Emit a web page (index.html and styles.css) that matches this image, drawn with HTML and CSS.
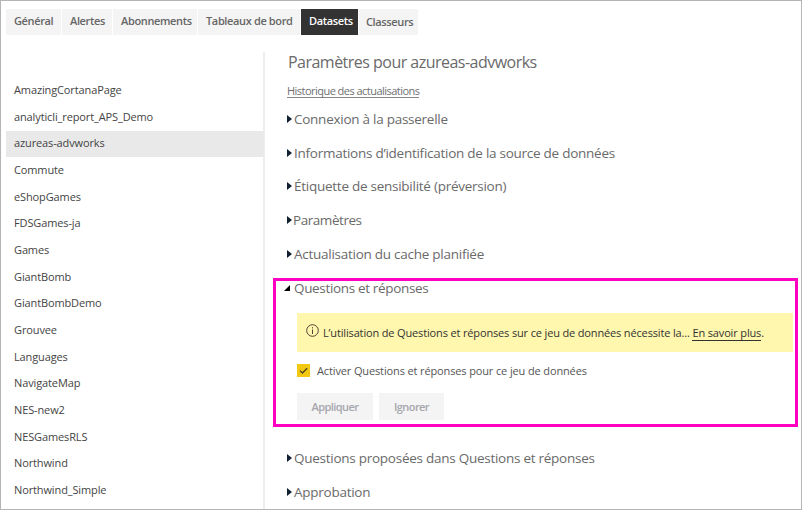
FILE: index.html
```html
<!DOCTYPE html>
<html lang="fr">
<head>
<meta charset="utf-8">
<title>Paramètres</title>
<link rel="stylesheet" href="styles.css">
</head>
<body>
<div class="page">
  <nav class="tabs">
    <a class="tab tab-general">Général</a>
    <a class="tab tab-alerts">Alertes</a>
    <a class="tab tab-subs">Abonnements</a>
    <a class="tab tab-dash">Tableaux de bord</a>
    <a class="tab tab-data active">Datasets</a>
    <a class="tab tab-books">Classeurs</a>
  </nav>
  <div class="body">
    <ul class="datasets">
      <li>AmazingCortanaPage</li>
      <li>analyticli_report_APS_Demo</li>
      <li class="selected">azureas-advworks</li>
      <li>Commute</li>
      <li>eShopGames</li>
      <li>FDSGames-ja</li>
      <li>Games</li>
      <li>GiantBomb</li>
      <li>GiantBombDemo</li>
      <li>Grouvee</li>
      <li>Languages</li>
      <li>NavigateMap</li>
      <li>NES-new2</li>
      <li>NESGamesRLS</li>
      <li>Northwind</li>
      <li>Northwind_Simple</li>
    </ul>
    <main class="settings">
      <h1>Paramètres pour azureas-advworks</h1>
      <div class="history"><a>Historique des actualisations</a></div>
      <h2><svg class="arrow" viewBox="0 0 5 8"><path d="M0 0L5 4L0 8Z"/></svg><span>Connexion à la passerelle</span></h2>
      <h2><svg class="arrow" viewBox="0 0 5 8"><path d="M0 0L5 4L0 8Z"/></svg><span>Informations d’identification de la source de données</span></h2>
      <h2><svg class="arrow" viewBox="0 0 5 8"><path d="M0 0L5 4L0 8Z"/></svg><span>Étiquette de sensibilité (préversion)</span></h2>
      <h2 class="tight"><svg class="arrow" viewBox="0 0 5 8"><path d="M0 0L5 4L0 8Z"/></svg><span>Paramètres</span></h2>
      <h2><svg class="arrow" viewBox="0 0 5 8"><path d="M0 0L5 4L0 8Z"/></svg><span>Actualisation du cache planifiée</span></h2>
      <section class="qna">
        <h2><svg class="arrow open" viewBox="0 0 6 6"><path d="M6 0V6H0Z"/></svg><span>Questions et réponses</span></h2>
        <div class="notice">
          <svg class="info" viewBox="0 0 13 13"><circle cx="6.5" cy="6.5" r="5.8"/><path d="M6.5 5.5V10M6.5 3.2V4.4"/></svg>
          <p>L’utilisation de Questions et réponses sur ce jeu de données nécessite la... <a>En savoir plus</a>.</p>
        </div>
        <label class="check"><svg viewBox="0 0 13 13"><path d="M3 6.6L5.4 9L10.2 4.2"/></svg><span>Activer Questions et réponses pour ce jeu de données</span></label>
        <div class="buttons"><button class="apply" disabled>Appliquer</button><button class="ignore" disabled>Ignorer</button></div>
      </section>
      <h2><svg class="arrow" viewBox="0 0 5 8"><path d="M0 0L5 4L0 8Z"/></svg><span>Questions proposées dans Questions et réponses</span></h2>
      <h2><svg class="arrow" viewBox="0 0 5 8"><path d="M0 0L5 4L0 8Z"/></svg><span>Approbation</span></h2>
    </main>
  </div>
</div>
</body>
</html>
```

FILE: styles.css
```css
* { box-sizing: border-box; }
body { margin: 0; font-family: "Open Sans", "Noto Sans", sans-serif; background: #fff; }
h1, h2, p, ul { margin: 0; padding: 0; font-weight: 400; }
.page { width: 802px; height: 510px; border: 1px solid #b5b5b5; padding: 8px 0 0 5px; overflow: hidden; }
.tabs { display: flex; gap: 1px; height: 26px; }
.tab { padding-left: 8px; background: #f4f4f4; color: #666; font-size: 11px; font-weight: 600; line-height: 24px; letter-spacing: -0.36px; white-space: nowrap; }
.tab-general { width: 55px; }
.tab-alerts { width: 50px; }
.tab-subs { width: 84px; }
.tab-dash { width: 102px; }
.tab-data { width: 57px; }
.tab-books { width: 59px; padding-left: 7px; line-height: 26px; }
.tab.active { background: #333; color: #fff; }
.body { display: flex; margin-top: 17px; height: 457px; }
.datasets { width: 259px; padding-top: 25px; border-right: 2px solid #eee; list-style: none; }
.datasets li { height: 26.67px; padding-left: 8px; font-size: 11px; line-height: 26px; letter-spacing: -0.12px; color: #444; white-space: nowrap; }
.datasets .selected { margin-right: -1px; background: linear-gradient(#e9e9e9, #e9e9e9) 0 1px / 100% 26px no-repeat; }
.settings { flex: 1; min-width: 0; }
.settings h1 { margin: 0 0 0 23px; height: 21px; line-height: 21px; font-size: 16px; letter-spacing: -0.52px; color: #6a6a6a; white-space: nowrap; }
.history { margin-left: 22px; padding-top: 11px; height: 29px; font-size: 11px; line-height: 14px; letter-spacing: -0.53px; color: #707070; }
.history a { display: inline-block; height: 14px; border-bottom: 1px solid #888; white-space: nowrap; }
.settings h2 { display: flex; align-items: center; margin-left: 22px; height: 33.8px; font-size: 13.5px; letter-spacing: -0.26px; color: #6a6a6a; white-space: nowrap; }
.settings h2.tight .arrow { margin-right: 1px; }
.settings h2.tight { letter-spacing: -0.45px; }
.arrow { width: 5px; height: 8px; margin-right: 2px; fill: #102030; flex: none; }
.qna { width: 525px; height: 149px; margin: 7px 0 14px 8px; border: 3px solid #ff00c3; }
.settings .qna h2 { height: 15px; margin-left: 8px; letter-spacing: -0.34px; }
.qna .arrow.open { width: 6px; height: 6px; margin-right: 4px; fill: #000; }
.notice { display: flex; margin: 17px 2px 0 21px; height: 39px; background: #fff7ad; color: #333; padding-left: 9px; }
.info { width: 13px; height: 13px; margin-top: 11px; fill: none; stroke: #4d4433; stroke-width: 1; }
.notice p { margin-left: 4px; font-size: 11px; line-height: 40px; letter-spacing: -0.15px; white-space: nowrap; }
.notice a { border-bottom: 1px solid #333; }
.check { display: flex; align-items: center; margin: 11px 0 0 21px; height: 15px; font-size: 11px; letter-spacing: -0.13px; color: #555; white-space: nowrap; }
.check svg { width: 13px; height: 13px; margin-right: 7px; background: #f2c811; fill: none; stroke: #4b4520; stroke-width: 1.3; }
.buttons { display: flex; gap: 6px; margin: 15px 0 0 21px; }
.buttons button { height: 27px; border: 0; padding: 0; background: #f4f4f4; color: #a6a6ad; font: 600 11px/27px "Open Sans", "Noto Sans", sans-serif; letter-spacing: -0.55px; }
.buttons .apply { width: 76px; }
.buttons .ignore { width: 65px; }
```
